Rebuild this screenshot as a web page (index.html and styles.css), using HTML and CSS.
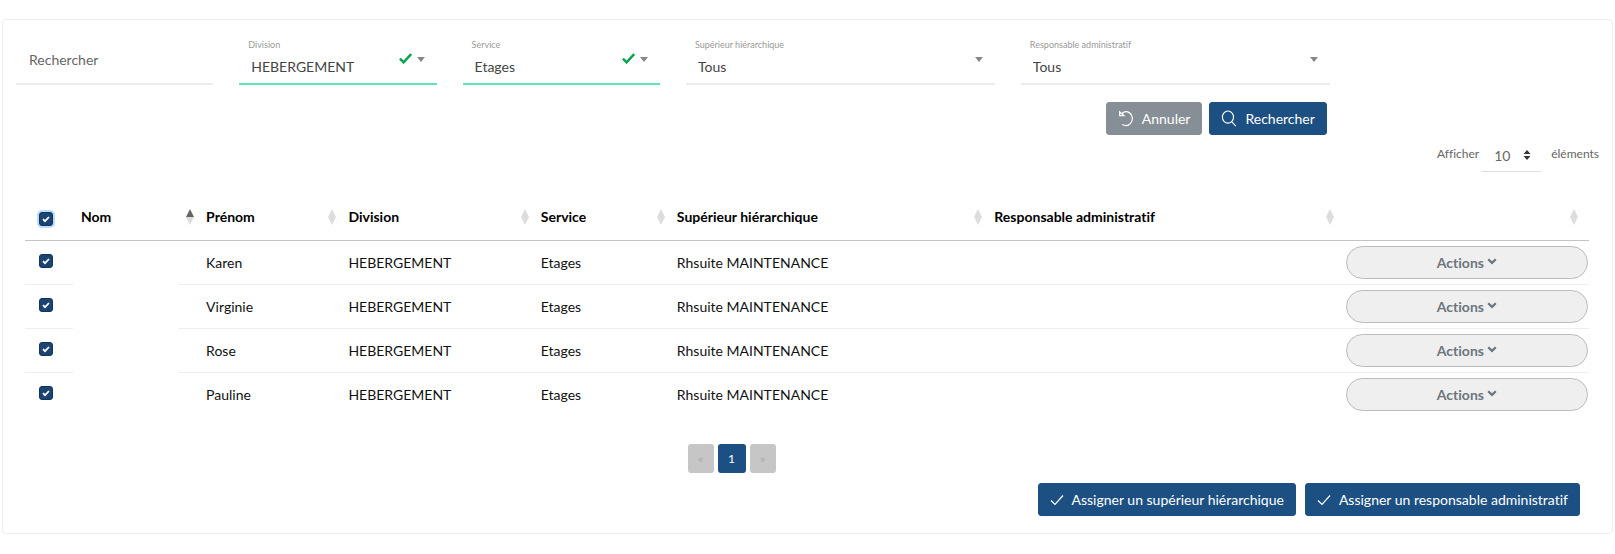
FILE: index.html
```html
<!DOCTYPE html>
<html lang="fr">
<head>
    <meta charset="UTF-8">
    <meta name="viewport" content="width=device-width, initial-scale=1.0">
    <title>Assignation des responsables</title>
    <link rel="stylesheet" href="styles.css">
</head>
<body>
    <svg class="defs" aria-hidden="true">
        <symbol id="check-bold" viewBox="0 0 13 11"><path d="M.9 5.6 4.6 9.3 12.2 1" fill="none" stroke="currentColor" stroke-width="2.5"/></symbol>
        <symbol id="check" viewBox="0 0 14 12"><path d="M1 6.5 5 10.5 13 1.5" fill="none" stroke="currentColor" stroke-width="1.2"/></symbol>
        <symbol id="undo" viewBox="0 0 16 18"><path d="M1.3 2V6H5.8ZM3.5 4C5.5 1.8 8.8 1.2 11.5 2.8 15.5 5.3 15.8 11 12.6 14.4 10.4 16.7 7 17 4 15.4" fill="none" stroke="currentColor" stroke-width="1.3"/></symbol>
        <symbol id="search" viewBox="0 0 16 18"><path d="M12.8 7.5A5.9 6.4 0 1 1 1 7.5a5.9 6.4 0 0 1 11.8 0ZM10.8 12.3 15.2 17" fill="none" stroke="currentColor" stroke-width="1.2"/></symbol>
        <symbol id="updown" viewBox="0 0 8 10"><path d="M4 0 7.5 4H.5ZM4 10 .5 6h7Z" fill="currentColor"/></symbol>
        <symbol id="chevron" viewBox="0 0 10 7"><path d="M1.2 1.2 5 4.9 8.8 1.2" fill="none" stroke="currentColor" stroke-width="2.2"/></symbol>
    </svg>
    <main class="card">
        <form class="filters">
            <div class="field">
                <input class="search" type="text" placeholder="Rechercher" aria-label="Rechercher">
            </div>
            <div class="field valid">
                <label for="division">Division</label>
                <select id="division"><option>HEBERGEMENT</option></select>
                <svg class="tick"><use href="#check-bold"/></svg>
                <span class="caret"></span>
            </div>
            <div class="field valid">
                <label for="service">Service</label>
                <select id="service"><option>Etages</option></select>
                <svg class="tick"><use href="#check-bold"/></svg>
                <span class="caret"></span>
            </div>
            <div class="field">
                <label for="superieur">Supérieur hiérarchique</label>
                <select id="superieur"><option>Tous</option></select>
                <span class="caret"></span>
            </div>
            <div class="field">
                <label for="responsable">Responsable administratif</label>
                <select id="responsable"><option>Tous</option></select>
                <span class="caret"></span>
            </div>
            <div class="buttons">
                <button class="btn btn-grey" type="reset"><svg class="icon"><use href="#undo"/></svg>Annuler</button>
                <button class="btn" type="button"><svg class="icon"><use href="#search"/></svg>Rechercher</button>
            </div>
        </form>

        <div class="length">
            <label for="length">Afficher</label>
            <span class="length-select">
                <select id="length"><option>10</option></select>
                <svg class="updown"><use href="#updown"/></svg>
            </span>
            <span>éléments</span>
        </div>

        <table class="list">
            <colgroup>
                <col class="c-check"><col class="c-nom"><col class="c-prenom"><col class="c-division">
                <col class="c-service"><col class="c-sup"><col class="c-resp"><col class="c-actions">
            </colgroup>
            <thead>
                <tr>
                    <th><input class="box focus" type="checkbox" aria-label="Tout sélectionner" checked></th>
                    <th class="sort asc">Nom</th>
                    <th class="sort">Prénom</th>
                    <th class="sort">Division</th>
                    <th class="sort">Service</th>
                    <th class="sort">Supérieur hiérarchique</th>
                    <th class="sort">Responsable administratif</th>
                    <th class="sort"></th>
                </tr>
            </thead>
            <tbody>
                <tr>
                    <td><input class="box" type="checkbox" aria-label="Karen" checked></td>
                    <td class="hidden-name"></td>
                    <td>Karen</td>
                    <td>HEBERGEMENT</td>
                    <td>Etages</td>
                    <td>Rhsuite MAINTENANCE</td>
                    <td></td>
                    <td><button class="actions" type="button">Actions <svg class="chevron"><use href="#chevron"/></svg></button></td>
                </tr>
                <tr>
                    <td><input class="box" type="checkbox" aria-label="Virginie" checked></td>
                    <td class="hidden-name"></td>
                    <td>Virginie</td>
                    <td>HEBERGEMENT</td>
                    <td>Etages</td>
                    <td>Rhsuite MAINTENANCE</td>
                    <td></td>
                    <td><button class="actions" type="button">Actions <svg class="chevron"><use href="#chevron"/></svg></button></td>
                </tr>
                <tr>
                    <td><input class="box" type="checkbox" aria-label="Rose" checked></td>
                    <td class="hidden-name"></td>
                    <td>Rose</td>
                    <td>HEBERGEMENT</td>
                    <td>Etages</td>
                    <td>Rhsuite MAINTENANCE</td>
                    <td></td>
                    <td><button class="actions" type="button">Actions <svg class="chevron"><use href="#chevron"/></svg></button></td>
                </tr>
                <tr>
                    <td><input class="box" type="checkbox" aria-label="Pauline" checked></td>
                    <td class="hidden-name"></td>
                    <td>Pauline</td>
                    <td>HEBERGEMENT</td>
                    <td>Etages</td>
                    <td>Rhsuite MAINTENANCE</td>
                    <td></td>
                    <td><button class="actions" type="button">Actions <svg class="chevron"><use href="#chevron"/></svg></button></td>
                </tr>
            </tbody>
        </table>

        <nav class="pages" aria-label="Pagination">
            <button class="page" type="button" disabled>«</button>
            <button class="page current" type="button">1</button>
            <button class="page" type="button" disabled>»</button>
        </nav>

        <div class="assign">
            <button class="btn" type="button"><svg class="icon-check"><use href="#check"/></svg>Assigner un supérieur hiérarchique</button>
            <button class="btn" type="button"><svg class="icon-check"><use href="#check"/></svg>Assigner un responsable administratif</button>
        </div>
    </main>
</body>
</html>
```
FILE: styles.css
```css
* {
    box-sizing: border-box;
}
body {
    margin: 0;
    padding: 19px 2px;
    background: #fff;
    color: #111;
    font-family: Lato, "Liberation Sans", sans-serif;
    font-size: 14px;
    font-variant-ligatures: none;
    line-height: 20px;
}
input, select, button {
    margin: 0;
    font: inherit;
    font-variant-ligatures: none;
    color: inherit;
}
svg {
    flex: none;
}
.defs {
    position: absolute;
    width: 0;
    height: 0;
}
.card {
    border: 1px solid #eee;
    border-radius: 4px;
    padding-bottom: 17px;
}

/* filters */
.filters {
    display: grid;
    grid-template-columns: 2fr 2fr 2fr 3fr 3fr;
    width: 83.3333%;
    padding: 18px 1px 0 0;
}
.field {
    position: relative;
    height: 47px;
    margin: 0 13px;
    border-bottom: 2px solid #ebebeb;
}
.field.valid {
    border-color: #5ee5b8;
}
.field label {
    display: block;
    padding: 1px 9px 0;
    color: #999;
    font-size: 9px;
    line-height: 12px;
}
.field select, .search {
    display: block;
    width: 100%;
    border: 0;
    outline: 0;
    appearance: none;
    background: none;
    color: #444;
}
.field select {
    height: 32px;
    padding: 0 12px;
}
.search {
    height: 42px;
    padding: 0 13px;
}
.search::placeholder {
    color: #666;
    opacity: 1;
}
.caret {
    position: absolute;
    right: 12px;
    top: 19px;
    border: 4px solid transparent;
    border-top: 5px solid #888;
    border-bottom: 0;
    pointer-events: none;
}
.tick {
    position: absolute;
    right: 25px;
    top: 15px;
    width: 13px;
    height: 11px;
    color: #08a550;
    pointer-events: none;
}
.buttons {
    grid-column: 1 / -1;
    display: flex;
    justify-content: flex-end;
    gap: 7px;
    padding: 17px 16px 0 0;
}
.btn {
    display: flex;
    align-items: center;
    height: 33px;
    padding: 0 11px;
    border: 1px solid #1c5083;
    border-radius: 3px;
    background: #1c5083;
    color: #fff;
}
.btn-grey {
    border-color: #868e96;
    background: #868e96;
}
.icon {
    width: 16px;
    height: 17px;
    margin-right: 8px;
}
.icon-check {
    width: 14px;
    height: 12px;
    margin-right: 8px;
}

/* page length */
.length {
    display: flex;
    justify-content: flex-end;
    padding: 9px 13px 0 0;
    color: #666;
    font-size: 12px;
}
.length-select {
    position: relative;
    width: 59px;
    margin: 0 10px 0 3px;
    border-bottom: 1px solid #ddd;
}
.length-select select {
    display: block;
    width: 100%;
    height: 27px;
    padding: 0 12px 4px;
    border: 0;
    appearance: none;
    background: none;
    font-size: 14px;
}
.updown {
    position: absolute;
    right: 10px;
    top: 6px;
    width: 8px;
    height: 10px;
    color: #333;
    pointer-events: none;
}

/* list */
.list {
    width: calc(100% - 45px);
    margin: 22px 23px 0 22px;
    border-collapse: separate;
    border-spacing: 0;
    table-layout: fixed;
}
.c-check { width: 55px; }
.c-nom { width: 8%; }
.c-prenom { width: 9.1%; }
.c-division { width: 12.3%; }
.c-service { width: 8.7%; }
.c-sup { width: 20.3%; }
.c-resp { width: 22.5%; }
.list th, .list td {
    padding: 5px 1px;
    text-align: left;
}
.list th {
    height: 47px;
    border-bottom: 1px solid #c4c4c4;
    color: #000;
    font-weight: bold;
}
.list td {
    border-bottom: 1px solid #eee;
}
.list tr:last-child td {
    border-bottom: 0;
}
.list thead th {
    border-bottom: 1px solid #c4c4c4;
}
.sort {
    position: relative;
}
.sort::before, .sort::after {
    content: "";
    position: absolute;
    right: 11px;
    top: 15px;
    border: 4px solid transparent;
    border-top: 0;
    border-bottom: 8px solid #ddd;
}
.sort::after {
    top: 23px;
    border-top: 8px solid #ddd;
    border-bottom: 0;
}
.sort.asc::before {
    border-bottom-color: #666;
}
.box {
    display: block;
    appearance: none;
    width: 14px;
    height: 14px;
    margin: 0 0 4px 13px;
    border: 1px solid #10345a;
    border-radius: 3px;
    background: #1b4471 url("data:image/svg+xml,%3Csvg xmlns='http://www.w3.org/2000/svg' viewBox='0 0 12 12'%3E%3Cpath d='M3 6.2 5 8.2 9 4' fill='none' stroke='white' stroke-width='1.8'/%3E%3C/svg%3E");
}
.focus {
    margin-top: 4px;
    margin-bottom: 0;
    box-shadow: 0 0 0 2px #bddcff;
}
.hidden-name {
    position: relative;
}
.hidden-name::after {
    content: "";
    position: absolute;
    left: -7px;
    right: 27px;
    top: 0;
    bottom: -1px;
    background: #fff;
}
.actions {
    display: block;
    width: 100%;
    height: 33px;
    padding: 0;
    border: 1px solid #bbb;
    border-radius: 17px;
    background: #efefef;
    color: #6c757d;
    font-weight: bold;
}
.chevron {
    width: 10px;
    height: 7px;
    vertical-align: 3px;
}

/* pagination */
.pages {
    display: flex;
    justify-content: center;
    gap: 4px;
    padding: 28px 152px 0 0;
}
.page {
    width: 26px;
    height: 29px;
    padding: 0;
    border: 0;
    border-radius: 3px;
    background: #c6c6c6;
    color: #aaa;
    font-size: 12px;
}
.page.current {
    width: 28px;
    background: #1c5083;
    color: #fff;
}
.assign {
    display: flex;
    justify-content: flex-end;
    gap: 9px;
    padding: 10px 32px 0 0;
}
```
